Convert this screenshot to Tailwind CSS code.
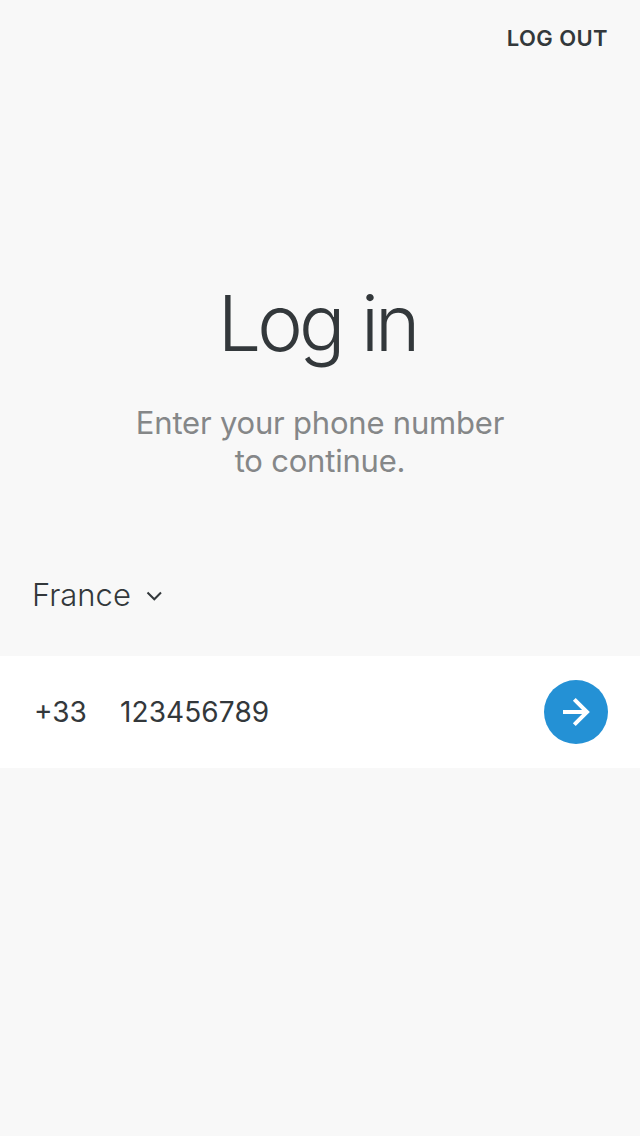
<!DOCTYPE html>
<html lang="en">
<head>
<meta charset="utf-8">
<title>Log in</title>
<script src="https://cdn.jsdelivr.net/npm/@tailwindcss/browser@4"></script>
</head>
<body class="bg-[#f8f8f8] font-['Inter',sans-serif] text-[#33383b]">
<main class="flex h-[1136px] w-[640px] flex-col overflow-hidden">
  <header class="flex h-[76px] items-center justify-end px-8">
    <button class="text-[22px] leading-none font-[560] tracking-[0.4px] whitespace-nowrap">LOG OUT</button>
  </header>
  <section class="mt-[199px] text-center">
    <h1 class="pr-[6px] text-[77px] leading-[96px] font-light tracking-[-4px] [word-spacing:2px]">Log in</h1>
    <p class="mt-[33px] text-[31px] leading-[38px] tracking-[-0.2px] text-[#858788]">Enter your phone number<br>to continue.</p>
  </section>
  <div class="mt-[88px] flex h-[54px] items-center gap-4 px-8">
    <span class="text-[31px] font-light">France</span>
    <svg class="mt-0.5 -ml-px h-4 w-4" viewBox="0 0 16 16" fill="none" stroke="currentColor" stroke-width="2"><path d="M1.5 4.5L8.3 11.3l6.7-6.8"/></svg>
  </div>
  <form class="mt-[34px] flex h-28 items-center bg-white px-8">
    <span class="w-[88px] pl-0.5 text-[28px]">+33</span>
    <span class="flex-1 text-[28px] tracking-[0.1px]">123456789</span>
    <button type="button" aria-label="Continue" class="flex size-16 items-center justify-center rounded-full bg-[#2491d5] text-white">
      <svg class="size-8" viewBox="0 0 32 32" fill="none" stroke="currentColor" stroke-width="4"><path d="M3 16h25M14.3 3.3L27 16 14.3 28.7"/></svg>
    </button>
  </form>
</main>
</body>
</html>
